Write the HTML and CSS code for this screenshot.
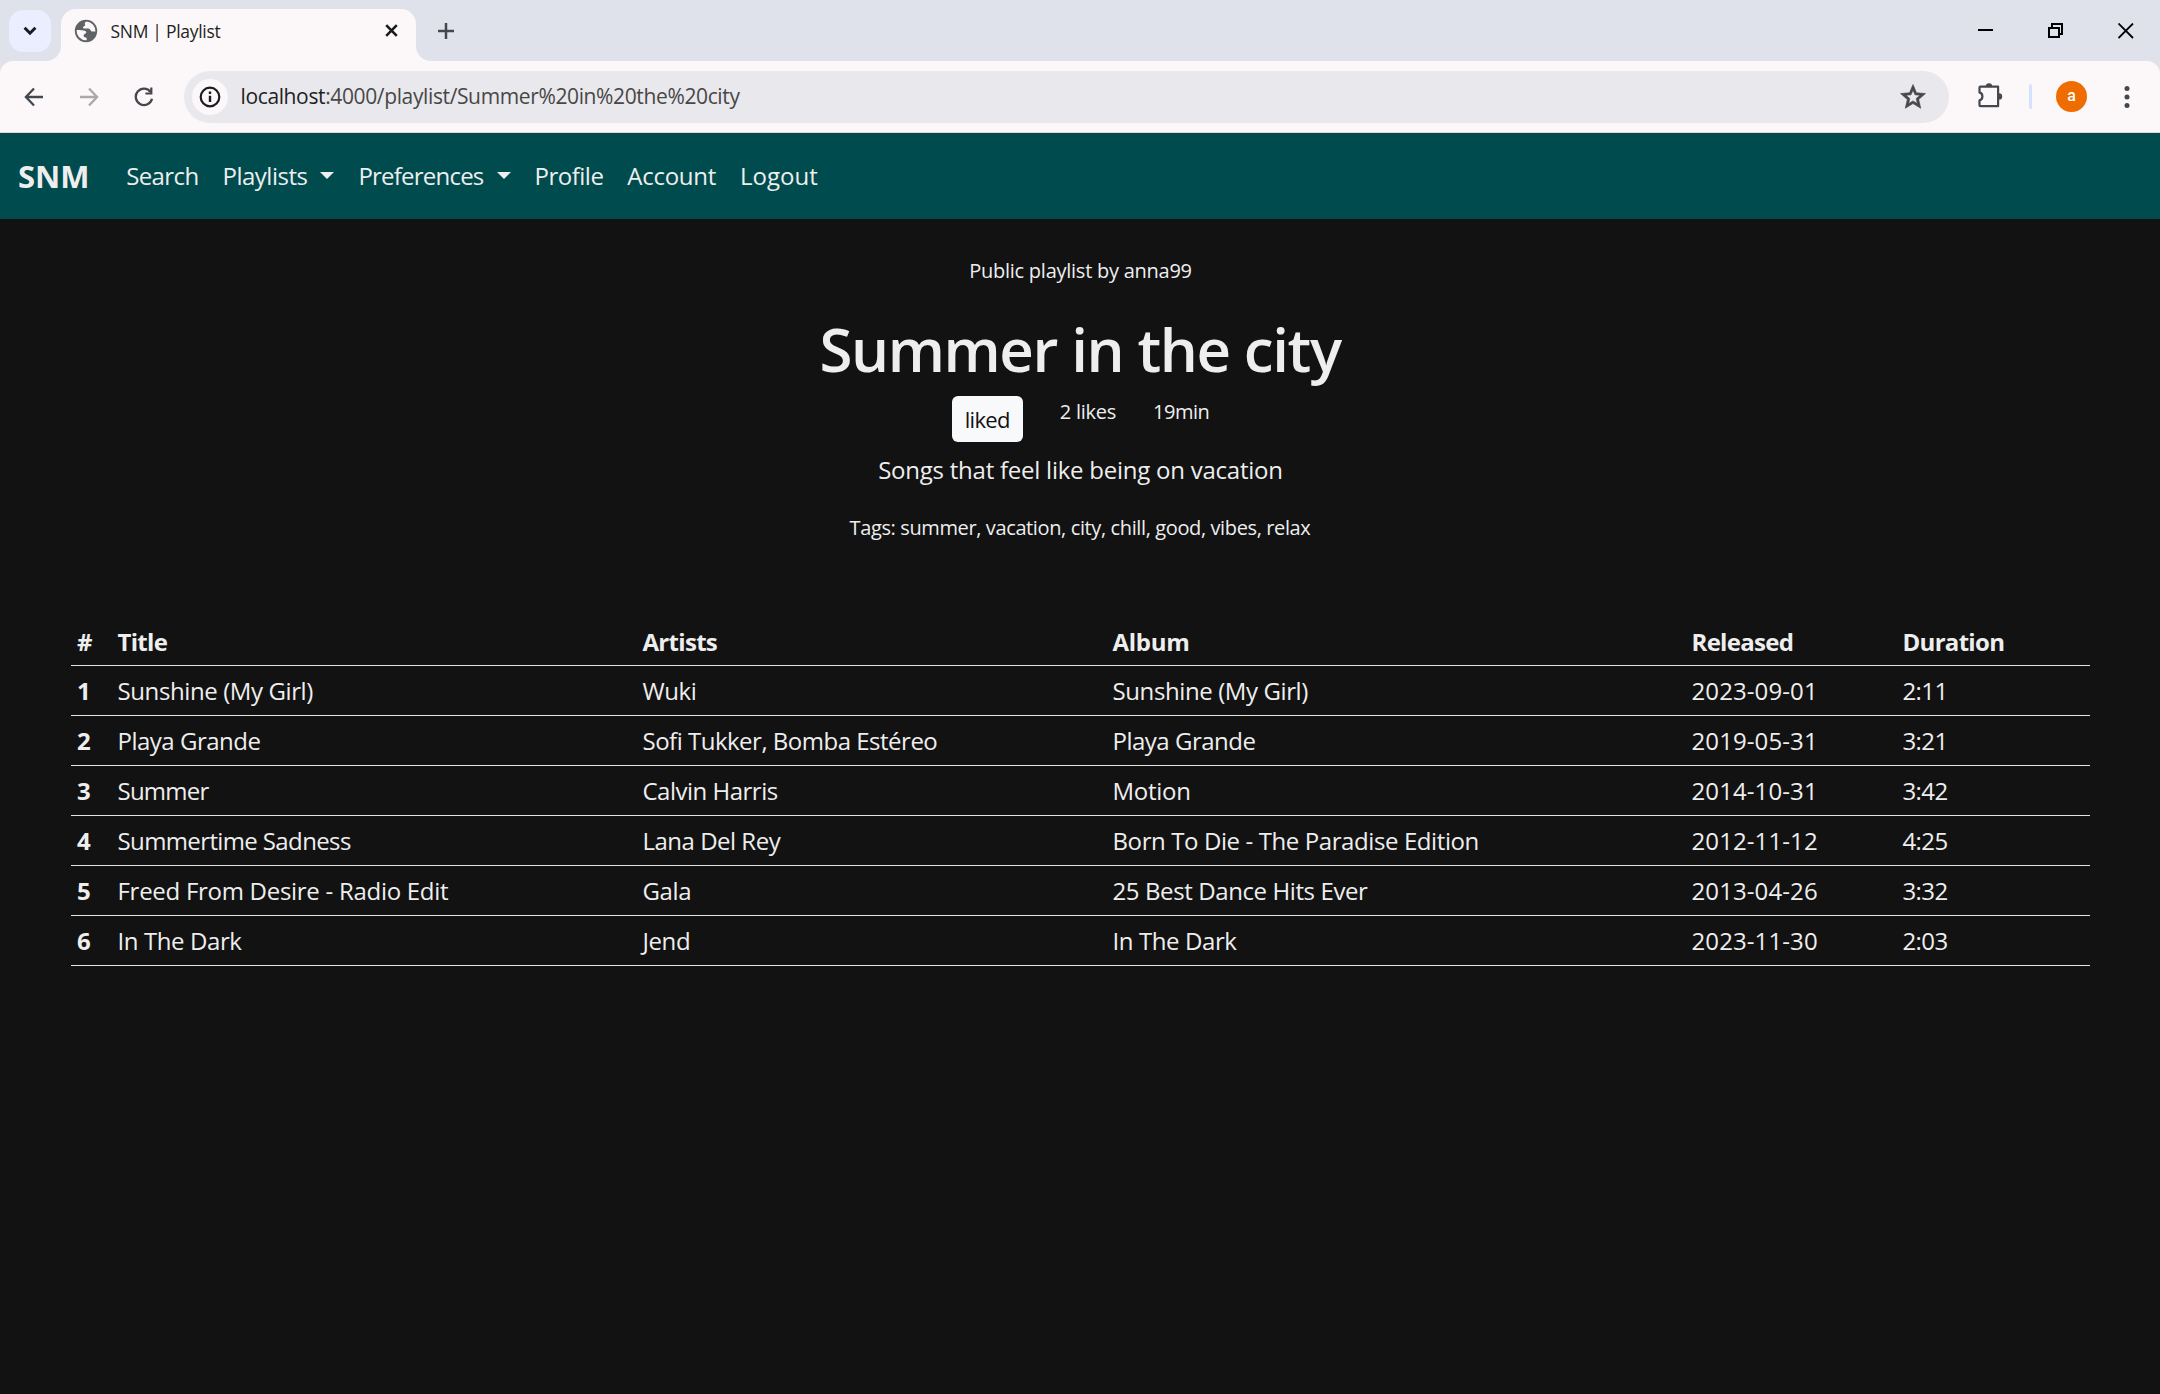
FILE: index.html
```html
<!DOCTYPE html>
<html lang="en">
<head>
<meta charset="utf-8">
<title>SNM | Playlist</title>
<link rel="stylesheet" href="styles.css">
</head>
<body>
<header class="browser">
  <div class="tabstrip">
    <button class="tab-search" aria-label="Search tabs"><svg width="14" height="10" viewBox="0 0 14 10"><path d="M1.6 1.8 7 7.2l5.4-5.4" fill="none" stroke="#1a1b1f" stroke-width="3"/></svg></button>
    <div class="tab">
      <svg class="globe" width="24" height="24" viewBox="0 0 24 24"><circle cx="12" cy="12" r="11.2" fill="#5f6368"/><path d="M12.6 2.6c-1.5.7-2.300 1.800-1.600 3 .600 1-.600 1.600-1.600 2.100-.900.500-.500 1.600.700 1.700h4.100c1.500 0 2.100 1.300 2.700 2.300.700 1.100 2.300.900 4.500.8a9.400 9.400 0 0 0-8.800-9.900zM2.700 11.100c2.900.2 7.200.1 8.700.900 1.300.700 1.100 2.100 0 2.600-1.200.500-1.900 1.200-1.700 2.400.1 1 .9 1.400 2.100 1.400.900.100 1 1.100.900 2.800A9.500 9.500 0 0 1 2.700 11.100z" fill="#fcf8f9"/></svg>
      <span class="tab-title">SNM | Playlist</span>
      <svg width="13" height="13" viewBox="0 0 13 13"><path d="M1.200 1.200l10.600 10.600M11.800 1.200L1.200 11.800" stroke="#1a1b1f" stroke-width="2.600"/></svg>
    </div>
    <svg class="new-tab" width="16" height="16" viewBox="0 0 16 16"><path d="M8 0v16M0 8h16" stroke="#45474d" stroke-width="2.500"/></svg>
    <div class="window-controls">
      <svg width="16" height="16" viewBox="0 0 16 16"><path d="M0 7h15" stroke="#000" stroke-width="2"/></svg>
      <svg width="16" height="16" viewBox="0 0 16 16"><path d="M1 5h10v9H1zM4 4.500V1h10v10h-3" fill="none" stroke="#000" stroke-width="2"/></svg>
      <svg width="16" height="16" viewBox="0 0 16 16"><path d="M.500.500l14.500 14.500M15 .5L.5 15" stroke="#000" stroke-width="1.800"/></svg>
    </div>
  </div>
  <div class="toolbar">
    <div class="history">
      <svg width="20" height="20" viewBox="0 0 20 20"><path d="M19 10H2.500M10 1.500 1.900 10l8.100 8.500" fill="none" stroke="#44474e" stroke-width="2.300"/></svg>
      <svg width="20" height="20" viewBox="0 0 20 20"><path d="M1 10h16.500M10 1.500l8.100 8.500L10 18.500" fill="none" stroke="#a9a8ab" stroke-width="2.300"/></svg>
      <svg width="20" height="20" viewBox="0 0 20 20"><path d="M16.600 5A8.200 8.200 0 1 0 18 11.700" fill="none" stroke="#44474e" stroke-width="2.300"/><path d="M18.400.500v7.100h-7V5.400h4.800V.5z" fill="#44474e"/></svg>
    </div>
    <div class="omnibox">
      <span class="site-info"><svg width="22" height="22" viewBox="0 0 22 22"><circle cx="11" cy="11" r="9.300" fill="none" stroke="#1a1b1f" stroke-width="2.200"/><path d="M11 9.700v6.300M11 5.600v2.500" stroke="#1a1b1f" stroke-width="2.400"/></svg></span>
      <span class="url"><b>localhost</b>:4000/playlist/Summer%20in%20the%20city</span>
      <svg class="star" width="30" height="30" viewBox="0 0 24 24"><path d="M22 9.240l-7.190-.62L12 2 9.190 8.630 2 9.240l5.460 4.730L5.820 21 12 17.270 18.180 21l-1.630-7.030L22 9.240zM12 15.100l-3.460 2.090.92-3.940-3.060-2.650 4.030-.35L12 6.540l1.580 3.720 4.030.35-3.060 2.650.92 3.940L12 15.100z" fill="#47484c" stroke="#47484c" stroke-width=".5"/></svg>
    </div>
    <svg class="puzzle" width="27" height="27" viewBox="0 0 27 27"><path d="M3.500 4.600h17.600v19.600H3.500a1 1 0 0 1-1-1v-4.800a4.200 4.200 0 0 0 0-8V5.600a1 1 0 0 1 1-1z" fill="none" stroke="#44474e" stroke-width="2.200" stroke-linejoin="round"/><path d="M8.800 4.500a3.200 3.200 0 0 1 6.400 0zM22 11.200a3.200 3.200 0 0 1 0 6.400z" fill="#44474e"/></svg>
    <span class="divider"></span>
    <span class="avatar">a</span>
    <svg class="menu" width="6" height="24" viewBox="0 0 6 24"><g fill="#44474e"><circle cx="3" cy="3.500" r="2.500"/><circle cx="3" cy="12" r="2.500"/><circle cx="3" cy="20.500" r="2.500"/></g></svg>
  </div>
</header>

<nav class="navbar">
  <a class="brand">SNM</a>
  <a class="t6">Search</a>
  <a class="t5 dropdown">Playlists</a>
  <a class="t7 dropdown">Preferences</a>
  <a class="t5">Profile</a>
  <a class="t3">Account</a>
  <a>Logout</a>
</nav>

<main>
  <section class="hero">
    <p class="small owner">Public playlist by anna99</p>
    <h1>Summer in the city</h1>
    <div class="stats">
      <button class="liked">liked</button>
      <span class="small">2 likes</span>
      <span class="small t5">19min</span>
    </div>
    <p class="description">Songs that feel like being on vacation</p>
    <p class="small tags">Tags: summer, vacation, city, chill, good, vibes, relax</p>
  </section>

  <table class="songs">
    <colgroup><col class="c-num"><col class="c-title"><col class="c-artists"><col class="c-album"><col class="c-released"><col></colgroup>
    <thead><tr><th>#</th><th>Title</th><th>Artists</th><th class="t3">Album</th><th>Released</th><th>Duration</th></tr></thead>
    <tbody>
      <tr><th>1</th><td>Sunshine (My Girl)</td><td>Wuki</td><td>Sunshine (My Girl)</td><td class="date">2023-09-01</td><td class="t6">2:11</td></tr>
      <tr><th>2</th><td class="t5">Playa Grande</td><td class="t5">Sofi Tukker, Bomba Estéreo</td><td class="t5">Playa Grande</td><td class="date">2019-05-31</td><td class="t6">3:21</td></tr>
      <tr><th>3</th><td class="t7">Summer</td><td class="t5">Calvin Harris</td><td class="t3">Motion</td><td class="date">2014-10-31</td><td class="t6">3:42</td></tr>
      <tr><th>4</th><td class="t6">Summertime Sadness</td><td class="t5">Lana Del Rey</td><td>Born To Die - The Paradise Edition</td><td class="date">2012-11-12</td><td class="t6">4:25</td></tr>
      <tr><th>5</th><td class="t3">Freed From Desire - Radio Edit</td><td>Gala</td><td>25 Best Dance Hits Ever</td><td class="date">2013-04-26</td><td class="t6">3:32</td></tr>
      <tr><th>6</th><td>In The Dark</td><td>Jend</td><td>In The Dark</td><td class="date">2023-11-30</td><td class="t6">2:03</td></tr>
    </tbody>
  </table>
</main>
</body>
</html>
```
FILE: styles.css
```css
* { box-sizing: border-box; }
body {
  margin: 0;
  min-height: 1394px;
  background: #121212;
  color: #eee;
  font: 24px/36px "Open Sans", "Noto Sans", sans-serif;
}
svg { display: block; flex: none; }
p, h1 { margin: 0; }
button { border: 0; padding: 0; font: inherit; }

/* browser chrome */
.browser { background: #dfe2eb; }
.tabstrip { display: flex; height: 61px; padding-left: 9px; }
.tab-search {
  display: grid;
  place-items: center;
  width: 42px;
  height: 42px;
  margin: 10px 10px 0 0;
  border-radius: 14px;
  background: #ebeeff;
}
.tab {
  position: relative;
  display: flex;
  align-items: center;
  width: 355px;
  height: 52px;
  margin-top: 9px;
  padding: 0 18px 9px 12.500px;
  border-radius: 15px 15px 0 0;
  background: #fcf8f9;
}
.tab::before, .tab::after {
  content: "";
  position: absolute;
  bottom: 0;
  width: 15px;
  height: 15px;
}
.tab::before { left: -15px; background: radial-gradient(circle at 0 0, transparent 14.500px, #fcf8f9 15.500px); }
.tab::after { right: -15px; background: radial-gradient(circle at 100% 0, transparent 14.500px, #fcf8f9 15.500px); }
.tab-title {
  flex: 1;
  margin-left: 13px;
  padding-top: 1px;
  color: #1f1f1f;
  font-size: 17.500px;
  letter-spacing: -.3px;
}
.new-tab { margin: 23px 0 0 22px; }
.window-controls { display: flex; gap: 54px; margin: 23px 26px 0 auto; }

.toolbar {
  display: flex;
  align-items: center;
  height: 72px;
  padding-left: 24px;
  border-bottom: 1px solid #d9d8dc;
  border-radius: 13px 13px 0 0;
  background: #fcf8f9;
}
.history { display: flex; gap: 35px; width: 160px; }
.omnibox {
  display: flex;
  align-items: center;
  width: 1765px;
  height: 52px;
  padding: 0 21px 0 8px;
  border-radius: 26px;
  background: #e9e8ec;
}
.site-info {
  display: grid;
  place-items: center;
  width: 36px;
  height: 36px;
  border-radius: 50%;
  background: #fcf8f9;
}
.url {
  flex: 1;
  margin: -1px 0 0 12.500px;
  color: #474747;
  font-size: 21px;
  letter-spacing: -.37px;
}
.url b { color: #1f1f1f; font-weight: 400; }
.puzzle { margin: -3px 0 0 28px; }
.divider { width: 3px; height: 25px; margin-left: 25px; border-radius: 2px; background: #d3e3fd; }
.avatar {
  width: 31px;
  height: 31px;
  margin-left: 24px;
  border-radius: 50%;
  background: #ef6c00;
  color: #fff;
  font: 500 16px/30px Roboto, sans-serif;
  text-align: center;
}
.menu { margin-left: 36.500px; }

/* site navigation */
.navbar {
  display: flex;
  align-items: center;
  gap: 24px;
  height: 86px;
  padding-left: 18px;
  background: #004b4d;
}
.brand { margin-right: 12.700px; font-size: 31px; font-weight: 700; letter-spacing: 0; }
.dropdown { display: flex; align-items: center; }
.dropdown::after {
  content: "";
  margin: -2px 0 0 13px;
  border: 7px solid transparent;
  border-top-color: #eee;
  border-bottom: 0;
}

/* letter tracking */
.t3.t3 { letter-spacing: -.28px; }
.t5.t5 { letter-spacing: -.5px; }
.t6.t6 { letter-spacing: -.62px; }
.t7.t7 { letter-spacing: -.78px; }
.date.date { letter-spacing: .1px; }

/* playlist header */
.hero { display: flex; flex-direction: column; align-items: center; padding-top: 36px; }
.small { font-size: 20px; line-height: 32px; letter-spacing: -.25px; }
.owner { padding-left: 1px; }
h1 { margin-top: 26px; font-size: 60px; line-height: 72px; font-weight: 600; letter-spacing: -1.400px; }
.stats { display: flex; gap: 37px; margin: 11px 0 0 1px; }
.stats .small { line-height: 32px; }
.liked {
  width: 71px;
  height: 46px;
  border-radius: 6px;
  background: #f8f9fa;
  color: #121212;
  font-size: 22px;
  letter-spacing: -.7px;
}
.description { margin-top: 10px; padding-left: 1px; letter-spacing: -.24px; }
.tags { margin-top: 24px; letter-spacing: -.38px; }

/* song table */
.songs {
  width: 2019px;
  margin: 71px 0 0 71px;
  border-collapse: collapse;
  table-layout: fixed;
}
.songs tr { height: 50px; border-bottom: 1px solid #e4e4e4; }
.songs th, .songs td { padding: 2px 0 0 6.500px; text-align: left; letter-spacing: -.4px; }
.songs th:first-child { padding-left: 6px; }
.songs thead th { padding-top: 4px; letter-spacing: -.7px; }
.c-num { width: 40px; }
.c-title { width: 525px; }
.c-artists { width: 470px; }
.c-album { width: 579px; }
.c-released { width: 211px; }
```
